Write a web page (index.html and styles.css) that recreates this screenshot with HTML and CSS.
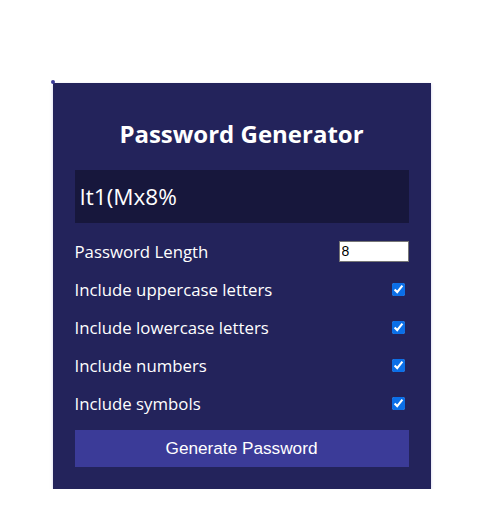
FILE: index.html
```html
<!DOCTYPE html>
<html>
<head>
<meta charset="utf-8">
<link rel="stylesheet" href="styles.css">
</head>
<body>
<div class="container">
  <span class="dot"></span>
  <h2 class="title">Password Generator</h2>
  <div class="result"><span class="result-text">It1(Mx8%</span></div>
  <div class="settings">
    <div class="setting">
      <label>Password Length</label>
      <input type="number" class="length" value="8">
    </div>
    <div class="setting">
      <label>Include uppercase letters</label>
      <input type="checkbox" class="check" checked>
    </div>
    <div class="setting">
      <label>Include lowercase letters</label>
      <input type="checkbox" class="check" checked>
    </div>
    <div class="setting">
      <label>Include numbers</label>
      <input type="checkbox" class="check" checked>
    </div>
    <div class="setting">
      <label>Include symbols</label>
      <input type="checkbox" class="check" checked>
    </div>
  </div>
  <button class="btn">Generate Password</button>
</div>
</body>
</html>
```

FILE: styles.css
```css
* { box-sizing: border-box; }
html, body { margin: 0; padding: 0; background: #fff; }
body {
  font-family: "Open Sans", "Noto Sans", sans-serif;
  color: #fff;
  padding-top: 83px;
}
.container {
  position: relative;
  width: 378px;
  height: 406px;
  margin: 0 auto;
  background: #23235b;
  box-shadow: 0 1px 3px rgba(120, 120, 200, 0.35);
  padding: 22px 22px 0 22px;
}
.dot {
  position: absolute;
  left: -2px;
  top: -3px;
  width: 4px;
  height: 4px;
  border-radius: 2px;
  background: #3b3b98;
}
.title {
  margin: 14px 0 21px;
  text-align: center;
  font-size: 24px;
  font-weight: 700;
  line-height: 30px;
}
.result {
  background: #17173c;
  height: 53px;
  display: flex;
  align-items: center;
  padding: 0 5px;
}
.result-text {
  font-family: "Open Sans", "Noto Sans", sans-serif;
  font-size: 22.5px;
}
.settings { margin-top: 17px; }
.setting {
  display: flex;
  justify-content: space-between;
  align-items: center;
  height: 22px;
  margin-bottom: 16px;
  font-size: 16.8px;
}
.setting label { color: #fff; }
.length {
  width: 70px;
  height: 21px;
  font-family: "Liberation Sans", Arial, sans-serif;
  font-size: 14px;
  padding: 1px 2px;
  border: 1px solid #767676;
  margin: 0;
}
.check {
  width: 13px;
  height: 13px;
  margin: 0 4px 0 0;
  accent-color: #0b6fe8;
}
.btn {
  display: block;
  width: 100%;
  height: 37px;
  margin-top: 2px;
  border: none;
  background: #3b3b98;
  color: #fff;
  font-family: "Liberation Sans", Arial, sans-serif;
  font-size: 17.2px;
}
```
